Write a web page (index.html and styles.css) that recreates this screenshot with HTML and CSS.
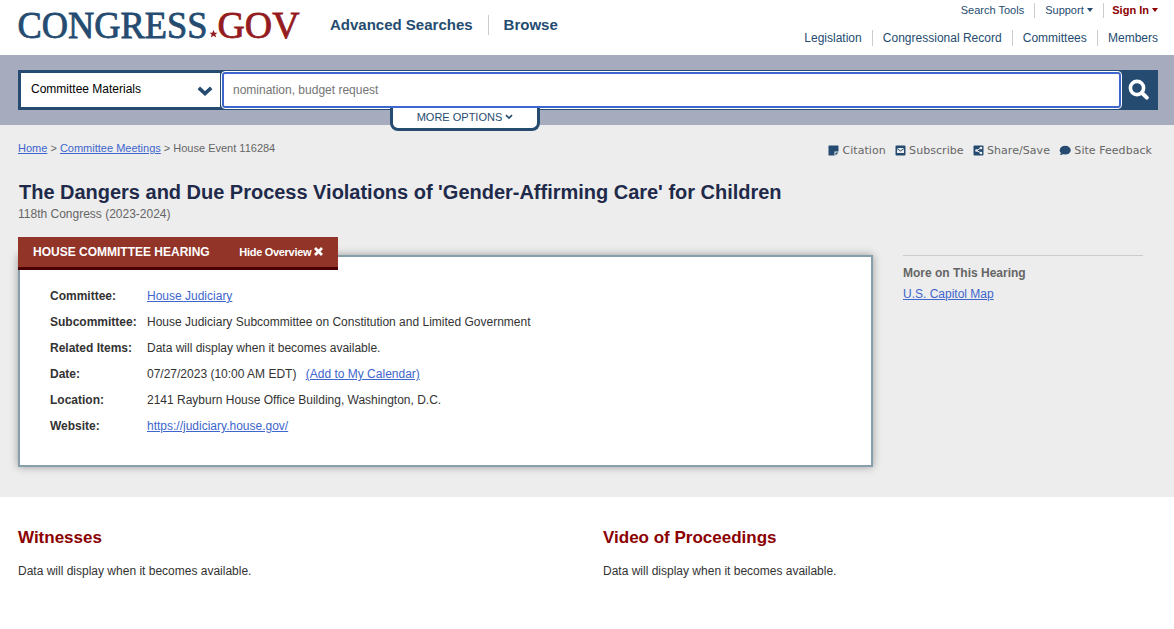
FILE: index.html
```html
<!DOCTYPE html>
<html lang="en">
<head>
    <meta charset="UTF-8">
    <meta name="viewport" content="width=device-width, initial-scale=1.0">
    <title>The Dangers and Due Process Violations of 'Gender-Affirming Care' for Children | Congress.gov</title>
    <link rel="stylesheet" href="styles.css">
</head>
<body>
    <header class="header">
        <a class="logo" href="#">
            <svg width="284" height="32" viewBox="0 0 284 32">
                <text class="logo-blue" x="-.5" y="28.500" textLength="190" lengthAdjust="spacingAndGlyphs">CONGRESS</text>
                <path fill="#941c20" d="M195.500 21l1.200 2.700h2.800l-2.200 1.900.9 2.900-2.700-1.700-2.700 1.700.9-2.900-2.200-1.900h2.800z"/>
                <text class="logo-red" x="199.500" y="28.500" textLength="82" lengthAdjust="spacingAndGlyphs">GOV</text>
            </svg>
        </a>
        <nav class="main-nav">
            <a href="#">Advanced Searches</a>
            <a href="#">Browse</a>
        </nav>
        <div class="side-nav">
            <nav class="nav-top">
                <a href="#">Search Tools</a>
                <a href="#">Support <i class="caret"></i></a>
                <a href="#" class="signin">Sign In <i class="caret"></i></a>
            </nav>
            <nav class="nav-bottom">
                <a href="#">Legislation</a>
                <a href="#">Congressional Record</a>
                <a href="#">Committees</a>
                <a href="#">Members</a>
            </nav>
        </div>
    </header>

    <div class="search-bar">
        <form class="search">
            <div class="search-select">
                <span>Committee Materials</span>
                <svg width="16" height="11" viewBox="0 0 16 11"><path d="M1.800 1.800L8 7.500l6.200-5.700" fill="none" stroke="#254c70" stroke-width="3.600"/></svg>
            </div>
            <input class="search-input" type="text" placeholder="nomination, budget request">
            <button class="search-button" type="button">
                <svg width="22" height="22" viewBox="0 0 22 22"><circle cx="9" cy="9" r="6.600" fill="none" stroke="#fff" stroke-width="3.600"/><path d="M13.800 13.800l5 4.800" stroke="#fff" stroke-width="4" stroke-linecap="round"/></svg>
            </button>
            <a class="more-options" href="#">MORE OPTIONS <svg width="8" height="6" viewBox="0 0 8 6"><path d="M1 1.200l3 2.800 3-2.800" fill="none" stroke="#254c70" stroke-width="1.700"/></svg></a>
        </form>
    </div>

    <main>
        <section class="featured">
            <div class="top-row">
                <div class="breadcrumb"><a href="#">Home</a> &gt; <a href="#">Committee Meetings</a> &gt; House Event 116284</div>
                <div class="tools">
                    <a href="#"><svg width="11" height="11" viewBox="0 0 11 11"><path d="M1 .5h9q.5 0 .5.500v5.500h-4v4h-6V1q0-.5.500-.5zM7.500 7.500h3l-3 3z"/></svg>Citation</a>
                    <a href="#"><svg width="11" height="11" viewBox="0 0 11 11"><rect x=".5" y=".5" width="10" height="10" rx="1"/><path d="M2 3h7v5H2z" fill="#ededed"/><path d="M2 3.500l3.500 2.500L9 3.500" fill="none" stroke="#254c70"/></svg>Subscribe</a>
                    <a href="#"><svg width="11" height="11" viewBox="0 0 11 11"><rect x=".5" y=".5" width="10" height="10" rx="1"/><path d="M8 3L3.500 5.500 8 8" fill="none" stroke="#ededed"/><g fill="#ededed"><circle cx="8" cy="3" r="1.300"/><circle cx="3.500" cy="5.500" r="1.300"/><circle cx="8" cy="8" r="1.300"/></g></svg>Share/Save</a>
                    <a href="#"><svg width="12" height="11" viewBox="0 0 12 11"><ellipse cx="6.200" cy="5.200" rx="5.500" ry="4.400"/><path d="M2 7q0 2-1.300 3 2.500 0 4-1.500z"/></svg>Site Feedback</a>
                </div>
            </div>
            <h1>The Dangers and Due Process Violations of 'Gender-Affirming Care' for Children</h1>
            <p class="congress">118th Congress (2023-2024)</p>

            <div class="columns">
                <div class="overview">
                    <div class="overview-tab">
                        <span>HOUSE COMMITTEE HEARING</span>
                        <a href="#">Hide Overview <svg width="9" height="9" viewBox="0 0 9 9"><path d="M1 1l7 7M8 1L1 8" stroke="#fff" stroke-width="2.800"/></svg></a>
                    </div>
                    <div class="overview-box">
                        <dl>
                            <dt>Committee:</dt>
                            <dd><a href="#">House Judiciary</a></dd>
                            <dt>Subcommittee:</dt>
                            <dd>House Judiciary Subcommittee on Constitution and Limited Government</dd>
                            <dt>Related Items:</dt>
                            <dd>Data will display when it becomes available.</dd>
                            <dt>Date:</dt>
                            <dd>07/27/2023 (10:00 AM EDT) <a class="calendar" href="#">(Add to My Calendar)</a></dd>
                            <dt>Location:</dt>
                            <dd>2141 Rayburn House Office Building, Washington, D.C.</dd>
                            <dt>Website:</dt>
                            <dd><a href="#">https://judiciary.house.gov/</a></dd>
                        </dl>
                    </div>
                </div>
                <aside class="more">
                    <h2>More on This Hearing</h2>
                    <a href="#">U.S. Capitol Map</a>
                </aside>
            </div>
        </section>

        <section class="content">
            <div>
                <h2>Witnesses</h2>
                <p>Data will display when it becomes available.</p>
            </div>
            <div>
                <h2>Video of Proceedings</h2>
                <p>Data will display when it becomes available.</p>
            </div>
        </section>
    </main>
</body>
</html>
```
FILE: styles.css
```css
* {
    box-sizing: border-box;
}
body {
    margin: 0;
    background: #fff;
    color: #333;
    font-family: "Liberation Sans", Arial, sans-serif;
    font-size: 12px;
}
a {
    color: #3e66cc;
}
h1, h2, p, dl, dd {
    margin: 0;
}
svg {
    flex: none;
}

/* header */
.header {
    display: flex;
    height: 55px;
    padding: 0 16px 0 18px;
}
.header a {
    color: #254c70;
    text-decoration: none;
    white-space: nowrap;
}
.logo {
    width: 312px;
    padding-top: 9px;
}
.logo svg {
    display: block;
    overflow: visible;
}
.logo text {
    font-family: "Liberation Serif", "Times New Roman", serif;
    font-size: 37px;
}
.logo-blue {
    fill: #254c70;
    stroke: #254c70;
    stroke-width: .8px;
}
.logo-red {
    fill: #941c20;
    stroke: #941c20;
    stroke-width: .8px;
}
.main-nav {
    display: flex;
    align-items: flex-start;
    padding-top: 15px;
    font-size: 15px;
    font-weight: bold;
    line-height: 20px;
}
.main-nav a + a {
    margin-left: 15px;
    padding-left: 15px;
    border-left: 1px solid #ccc;
}
.side-nav {
    margin-left: auto;
}
.side-nav nav {
    display: flex;
    justify-content: flex-end;
}
.nav-top {
    padding-top: 3px;
    font-size: 11px;
    line-height: 15px;
}
.nav-top a + a {
    margin-left: 10px;
    padding-left: 10px;
    border-left: 1px solid #ccc;
}
.nav-top a.signin {
    padding-left: 8px;
    color: #8b0000;
    font-weight: bold;
}
.nav-top a + a.signin {
    margin-left: 10.500px;
    padding-left: 8px;
}
.caret {
    display: inline-block;
    border: 3px solid transparent;
    border-top: 4px solid;
    border-bottom: 0;
    vertical-align: 2px;
}
.nav-bottom {
    padding-top: 12px;
    line-height: 16px;
}
.nav-bottom a + a {
    margin-left: 10.500px;
    padding-left: 9.700px;
    border-left: 1px solid #ccc;
}

/* search */
.search-bar {
    height: 70px;
    padding: 15px 16px 0 18px;
    background: #a6abbe;
}
.search {
    position: relative;
    display: flex;
    height: 40px;
    background: #254c70;
}
.search-select {
    display: flex;
    align-items: center;
    justify-content: space-between;
    width: 199px;
    margin: 3px 1px 3px 3px;
    padding: 0 7px 2px 10px;
    background: #fff;
    color: #000;
}
.search-select svg {
    margin-top: 4px;
}
.search-input {
    width: 899px;
    margin: 2px 1px 2px;
    padding: 0 9px;
    border: 2px solid #3e66cc;
    border-radius: 3px;
    outline: 1px solid #fff;
    font: 12px "Liberation Sans", Arial, sans-serif;
}
.search-input::placeholder {
    color: #757575;
}
.search-button {
    display: flex;
    align-items: center;
    justify-content: center;
    width: 34px;
    padding: 0;
    border: 0;
    background: none;
}
.more-options {
    position: absolute;
    top: 38px;
    left: 372px;
    width: 150px;
    height: 23px;
    border: 3px solid #254c70;
    border-top: 0;
    border-radius: 0 0 8px 8px;
    background: #fff;
    color: #254c70;
    font-size: 11px;
    line-height: 18px;
    text-align: center;
    text-decoration: none;
}
.more-options svg {
    vertical-align: 1px;
}

/* overview */
.featured {
    height: 372px;
    padding: 0 18px;
    background: #ededed;
}
.top-row {
    display: flex;
    justify-content: space-between;
    padding-top: 15px;
}
.breadcrumb {
    color: #666;
    font-size: 11px;
    line-height: 16px;
}
.tools {
    display: flex;
    gap: 9.400px;
    padding: 2px 4px 0 0;
    font-family: "DejaVu Sans", Verdana, sans-serif;
    font-size: 11px;
    letter-spacing: .05px;
    line-height: 17px;
}
.tools a {
    display: flex;
    align-items: center;
    gap: 3px;
    color: #666;
    text-decoration: none;
}
.tools svg {
    fill: #254c70;
}
h1 {
    margin: 21px 0 0 1px;
    color: #1f2a4a;
    font-size: 20px;
    letter-spacing: -.015px;
    line-height: 24px;
}
.congress {
    margin-top: 2px;
    color: #666;
    line-height: 16px;
}
.columns {
    display: flex;
    margin-top: 15px;
}
.overview {
    width: 855px;
}
.overview-tab {
    position: relative;
    display: flex;
    justify-content: space-between;
    width: 320px;
    height: 33px;
    padding: 0 15px;
    border-bottom: 3px solid #4d0000;
    background: #923428;
    color: #fff;
    font-weight: bold;
    line-height: 30px;
}
.overview-tab a {
    color: #fff;
    font-size: 11px;
    font-weight: bold;
    letter-spacing: -.3px;
    text-decoration: none;
}
.overview-box {
    height: 212px;
    margin-top: -15px;
    padding: 26px 30px;
    border: 2px solid #869fab;
    background: #fff;
    box-shadow: 0 0 8px rgba(0, 0, 0, .35);
}
dl {
    display: grid;
    grid-template-columns: 97px auto;
    line-height: 26px;
}
dt {
    font-weight: bold;
}
.calendar {
    margin-left: 6px;
}
.more {
    width: 240px;
    height: 60px;
    margin: 18px 0 0 30px;
    padding-top: 7px;
    border-top: 1px solid #ccc;
    line-height: 21px;
}
.more h2 {
    color: #666;
    font-size: 12px;
}

/* content */
.content {
    display: grid;
    grid-template-columns: 585px auto;
    padding: 30px 18px;
}
.content h2 {
    color: #8b0000;
    font-size: 17px;
    line-height: 22px;
}
.content p {
    margin-top: 14px;
    line-height: 16px;
}
```
